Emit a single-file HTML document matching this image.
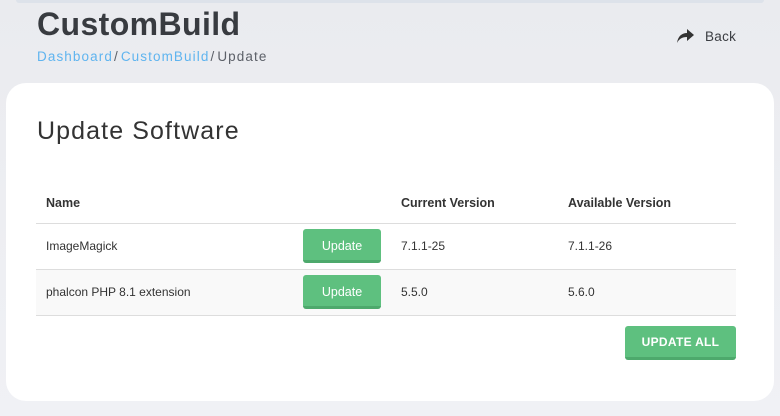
<!DOCTYPE html>
<html><head><style>
*{margin:0;padding:0;box-sizing:border-box}
body{width:780px;height:416px;overflow:hidden;background:linear-gradient(#eaebef,#f0f1f5);font-family:"Liberation Sans",sans-serif;position:relative;color:#3a3d42}
.topbar{position:absolute;left:16px;right:16px;top:0;height:3px;background:#dde2ea;border-radius:0 0 4px 4px}
h1{position:absolute;left:37px;top:6px;font-size:32px;font-weight:bold;letter-spacing:0.4px;color:#383b40}
.bc{position:absolute;left:37px;top:49px;font-size:13.5px;color:#5c6068;letter-spacing:1.1px}
.bc a{color:#5fb4ef;text-decoration:none}
.bc s{text-decoration:none;margin:0 2px 0 1px}
.back{position:absolute;left:676px;top:28px;font-size:13.5px;color:#3a3d42;display:flex;align-items:center;gap:10px;letter-spacing:0.3px}
.card{position:absolute;left:6px;top:83px;width:768px;height:318px;background:#fff;border-radius:20px}
h2{position:absolute;left:31px;top:34px;font-size:25px;font-weight:normal;color:#333;letter-spacing:1.1px}
table{position:absolute;left:30px;top:100px;width:700px;border-collapse:collapse;font-size:12px;color:#333}
th{text-align:left;font-weight:bold;height:40px;border-bottom:1px solid #ddd;font-size:12.5px;padding-top:0}
td{height:46px;border-bottom:1px solid #ddd}
tr.alt td{background:#f9f9f9}
.btn{display:inline-block;width:78px;height:34px;background:#5ec07f;color:#fff;border-radius:3px;border-bottom:3px solid #4da96c;text-align:center;line-height:34px;font-size:12.5px}
.all{position:absolute;left:619px;top:243px;width:111px;height:34px;background:#5ec07f;color:#fff;border-radius:3px;border-bottom:3px solid #4da96c;text-align:center;line-height:33px;font-size:12px;font-weight:bold;letter-spacing:.3px}
</style></head><body>
<div class="topbar"></div>
<h1>CustomBuild</h1>
<div class="bc"><a>Dashboard</a><s>/</s><a>CustomBuild</a><s>/</s>Update</div>
<div class="back"><svg width="19" height="16" viewBox="0 0 19 16"><path d="M1 15 C2 8 6 5 11 5 V1 L18 7 L11 13 V9 C6 9 3 11 1 15Z" fill="#333"/></svg>Back</div>
<div class="card">
<h2>Update Software</h2>
<table>
<tr><th style="padding-left:10px;width:267px">Name</th><th style="width:98px"></th><th style="width:167px">Current Version</th><th>Available Version</th></tr>
<tr><td style="padding-left:10px">ImageMagick</td><td><span class="btn">Update</span></td><td>7.1.1-25</td><td>7.1.1-26</td></tr>
<tr class="alt"><td style="padding-left:10px">phalcon PHP 8.1 extension</td><td><span class="btn">Update</span></td><td>5.5.0</td><td>5.6.0</td></tr>
</table>
<div class="all">UPDATE ALL</div>
</div>
</body></html>
